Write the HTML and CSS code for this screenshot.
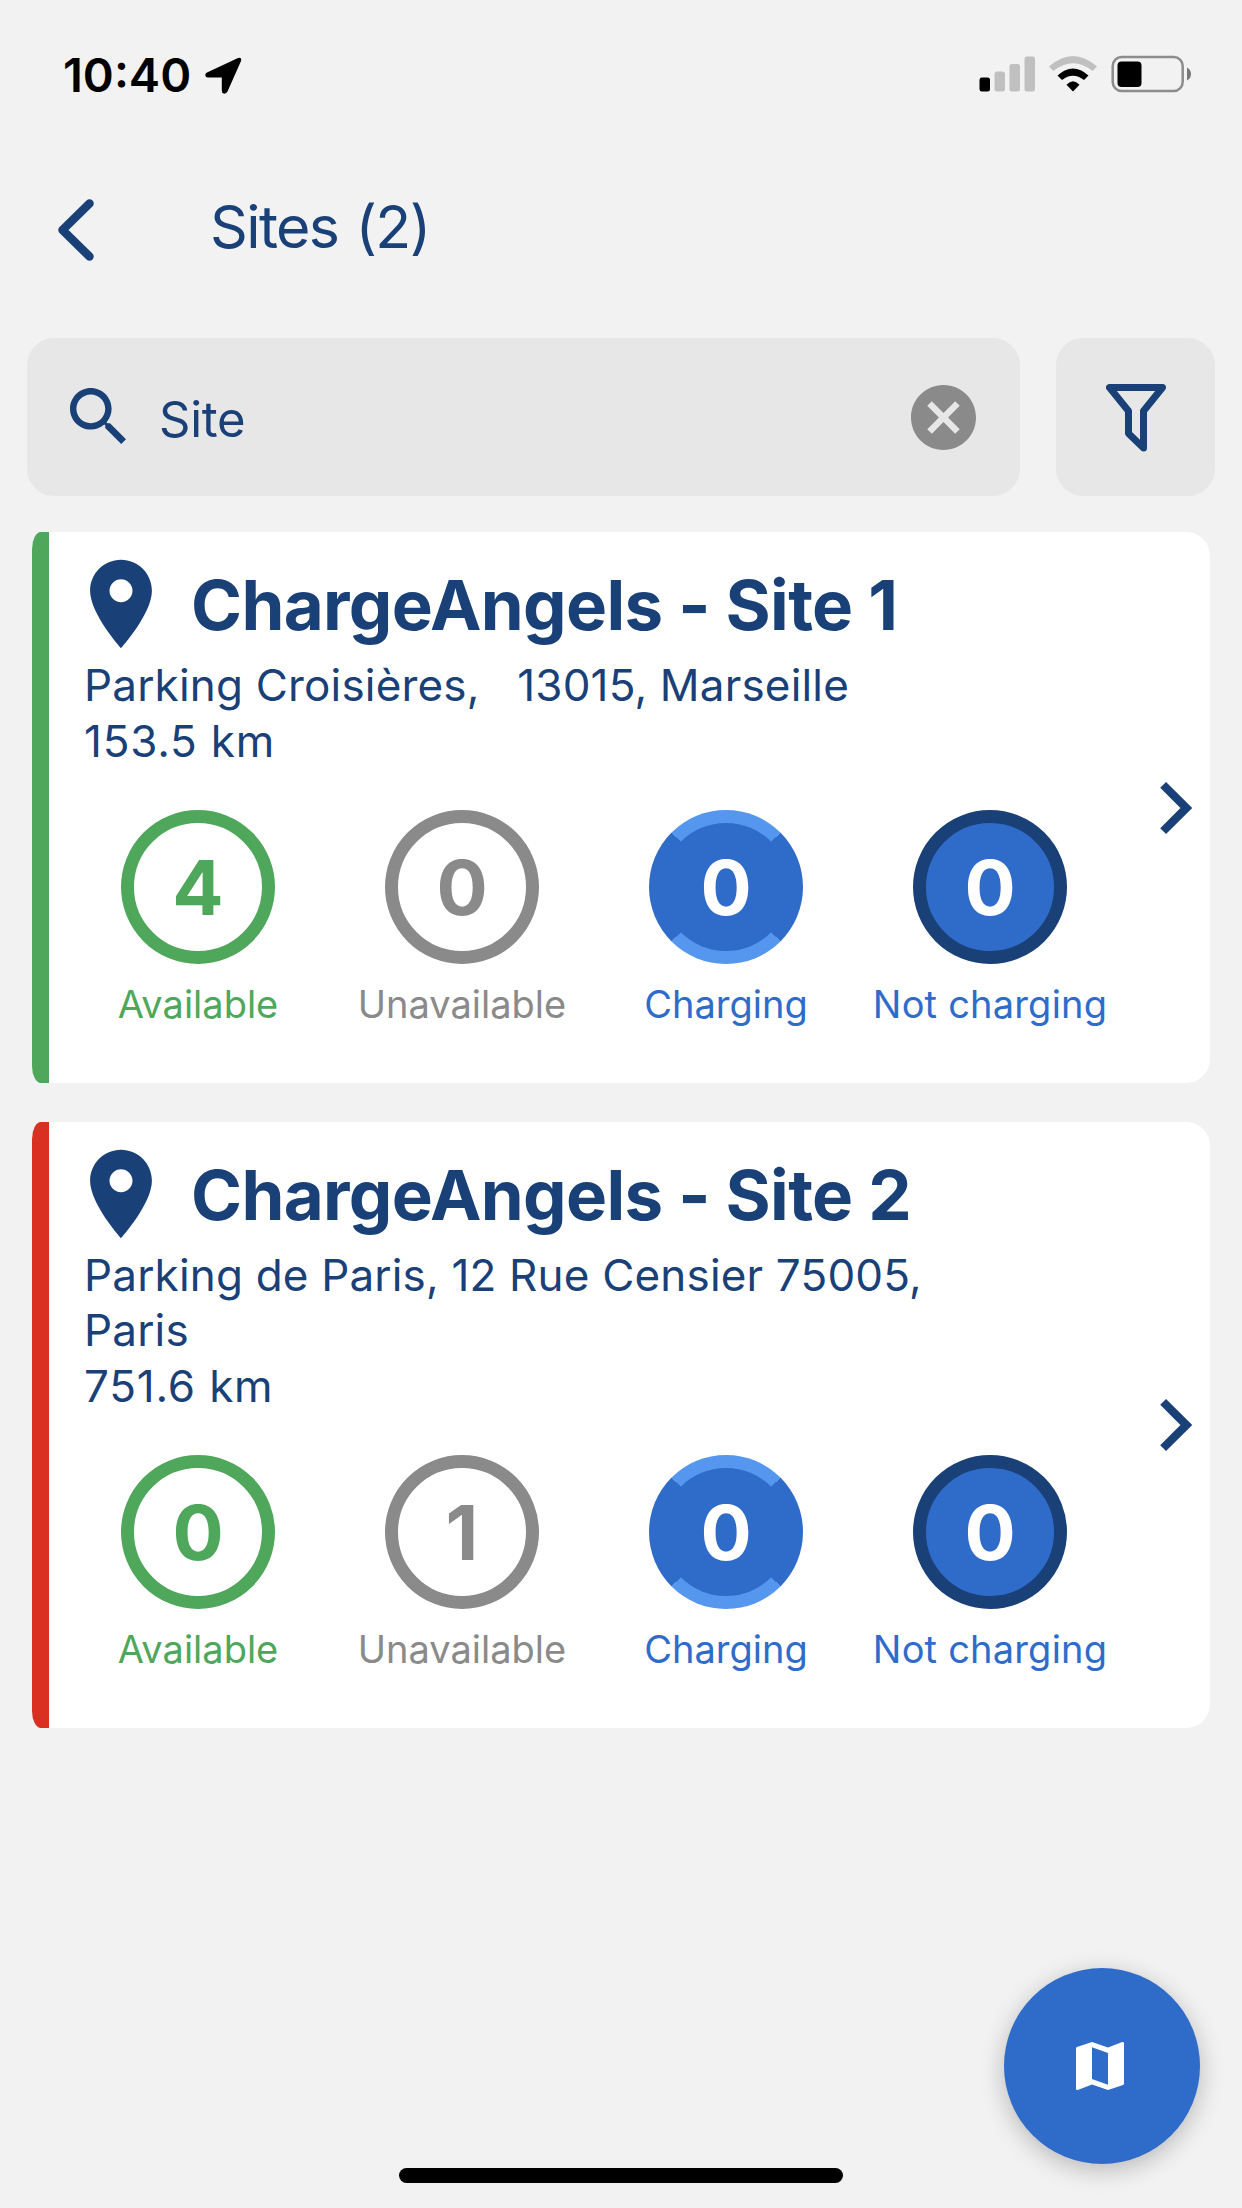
FILE: index.html
```html
<!DOCTYPE html>
<html lang="en">
<head>
<meta charset="utf-8">
<title>Sites</title>
<link rel="stylesheet" href="styles.css">
</head>
<body>
<svg class="defs" aria-hidden="true">
  <symbol id="pin" viewBox="0 0 24 24"><path d="M12 2C8.130 2 5 5.130 5 9c0 5.250 7 13 7 13s7-7.750 7-13c0-3.870-3.130-7-7-7zm0 9.600a2.600 2.600 0 1 1 0-5.200 2.600 2.600 0 0 1 0 5.200z"/></symbol>
  <symbol id="chevron" viewBox="0 0 32 52"><path d="M4 3.500 26.500 26 4 48.500" fill="none" stroke="currentColor" stroke-width="8"/></symbol>
</svg>
<div class="screen">
  <header class="status-bar">
    <div class="status-left">
      <span class="clock">10:40</span>
      <svg class="location" viewBox="0 0 37 37"><path d="M2 15.600 32.500 1.200Q37.500-.5 35.800 4.500L22.500 34.500Q21.200 37 18.800 36.600 16.800 36.200 16.800 33.500V20.500H3Q.5 20.500.3 18.500.1 16.600 2 15.600z"/></svg>
    </div>
    <svg class="indicators" viewBox="0 0 214 38">
      <rect x="1.500" y="22.500" width="10.500" height="14" rx="2.500"/>
      <g fill="#c0c0c0"><rect x="16.500" y="16.500" width="10.500" height="20" rx="2.500"/><rect x="31.500" y="9" width="10.500" height="27.500" rx="2.500"/><rect x="46.500" y="1.500" width="10.500" height="35" rx="2.500"/></g>
      <path d="M71 11.500 75.300 16Q95 .5 114.600 16L119 11.500Q95-9.500 71 11.500z" fill="#c0c0c0"/>
      <path d="M79.500 20.500 84 25Q95 16.500 106 25L110.500 20.500Q95 6.500 79.500 20.500z"/>
      <path d="M88.500 29.800 95 36.500 101.500 29.800Q95 22.500 88.500 29.800z"/>
      <rect x="134.700" y="2" width="70" height="34" rx="9" fill="none" stroke="#8c8c8c" stroke-width="2.500"/>
      <rect x="139.500" y="6.500" width="24" height="25.500" rx="4"/>
      <path d="M209 12.500Q213 14.500 213 19T209 25.500z" fill="#777"/>
    </svg>
  </header>

  <nav class="title-bar">
    <svg class="back" viewBox="0 0 36 62"><path d="M31.500 4.500 4.500 31 31.500 57.500" fill="none" stroke="currentColor" stroke-width="8.500" stroke-linecap="round" stroke-linejoin="round"/></svg>
    <h1 class="page-title">Sites (2)</h1>
  </nav>

  <div class="search-row">
    <div class="search-box">
      <svg class="search-icon" viewBox="3 3 17.490 17.490"><path d="M15.500 14h-.79l-.28-.27C15.410 12.590 16 11.110 16 9.500 16 5.910 13.090 3 9.500 3S3 5.910 3 9.500 5.910 16 9.500 16c1.610 0 3.090-.59 4.230-1.570l.27.28v.79l5 4.990L20.490 19l-4.990-5zm-6 0C7.010 14 5 11.990 5 9.500S7.010 5 9.500 5 14 7.010 14 9.500 11.990 14 9.500 14z"/></svg>
      <span class="query">Site</span>
      <svg class="clear" viewBox="2 2 20 20"><path fill="#8a8a8a" d="M12 2C6.470 2 2 6.470 2 12s4.470 10 10 10 10-4.470 10-10S17.530 2 12 2zm5 13.590L15.590 17 12 13.410 8.410 17 7 15.590 10.590 12 7 8.410 8.410 7 12 10.590 15.590 7 17 8.410 13.410 12 17 15.590z"/></svg>
    </div>
    <div class="filter-box">
      <svg class="filter-icon" viewBox="0 0 60 68"><path d="M3.500 3.500H56.500L37.500 27V64L22.500 49.500V27z" fill="none" stroke="currentColor" stroke-width="7" stroke-linejoin="round"/></svg>
    </div>
  </div>

  <main class="sites">
    <article class="card card-green">
      <div class="card-body">
        <div class="card-head"><svg class="pin"><use href="#pin"/></svg><h2 class="card-title">ChargeAngels - Site 1</h2></div>
        <p class="address">Parking Croisières,   13015, Marseille</p>
        <p class="distance">153.5 km</p>
        <div class="stats">
          <div class="stat available"><div class="ring">4</div><span class="label">Available</span></div>
          <div class="stat unavailable"><div class="ring">0</div><span class="label">Unavailable</span></div>
          <div class="stat charging"><div class="ring">0</div><span class="label">Charging</span></div>
          <div class="stat not-charging"><div class="ring">0</div><span class="label">Not charging</span></div>
        </div>
      </div>
      <svg class="chevron"><use href="#chevron"/></svg>
    </article>
    <article class="card card-red">
      <div class="card-body">
        <div class="card-head"><svg class="pin"><use href="#pin"/></svg><h2 class="card-title">ChargeAngels - Site 2</h2></div>
        <p class="address">Parking de Paris, 12 Rue Censier 75005, Paris</p>
        <p class="distance">751.6 km</p>
        <div class="stats">
          <div class="stat available"><div class="ring">0</div><span class="label">Available</span></div>
          <div class="stat unavailable"><div class="ring">1</div><span class="label">Unavailable</span></div>
          <div class="stat charging"><div class="ring">0</div><span class="label">Charging</span></div>
          <div class="stat not-charging"><div class="ring">0</div><span class="label">Not charging</span></div>
        </div>
      </div>
      <svg class="chevron"><use href="#chevron"/></svg>
    </article>
  </main>

  <div class="fab"><svg class="map-icon" viewBox="3 3 18 18"><path d="M20.500 3l-.16.030L15 5.100 9 3 3.360 4.900c-.21.070-.36.250-.36.480V20.500c0 .28.220.5.5.5l.16-.030L9 18.900l6 2.100 5.640-1.900c.21-.070.360-.25.360-.48V3.500c0-.28-.22-.5-.5-.5zM15 19l-6-2.110V5l6 2.110V19z"/></svg></div>
  <div class="home-indicator"></div>
</div>
</body>
</html>
```
FILE: styles.css
```css
* { box-sizing: border-box; margin: 0; padding: 0; }
body { background: #f2f2f2; font-family: Inter, "Liberation Sans", sans-serif; color: #1a4078; }
svg { display: block; fill: currentColor; flex: none; }
.defs { position: absolute; width: 0; height: 0; }
.screen { position: relative; width: 1242px; height: 2208px; overflow: hidden; }

.status-bar { height: 150px; padding: 46px 50px 0 63px; display: flex; justify-content: space-between; align-items: flex-start; color: #000; }
.status-left { display: flex; align-items: center; height: 58px; }
.clock { font-size: 47px; font-weight: 600; line-height: 58px; }
.location { width: 37px; height: 37px; margin-left: 14px; }
.indicators { width: 214px; height: 38px; margin-top: 9px; }

.title-bar { height: 160px; padding-left: 58px; display: flex; align-items: center; }
.back { width: 36px; height: 62px; }
.page-title { margin: 0 0 7px 116px; font-size: 59px; font-weight: 400; line-height: 72px; letter-spacing: -1.6px; word-spacing: 2px; }

.search-row { display: flex; gap: 36px; padding: 28px 27px 0; }
.search-box { flex: 1; height: 158px; border-radius: 27px; background: #e7e7e7; display: flex; align-items: center; padding: 0 44px 0 43px; }
.search-icon { width: 56px; height: 56px; margin-bottom: 2px; }
.query { flex: 1; margin-left: 33px; padding-top: 5px; font-size: 49px; line-height: 60px; letter-spacing: -0.3px; }
.clear { width: 65px; height: 65px; }
.filter-box { width: 159px; height: 158px; border-radius: 27px; background: #e7e7e7; display: flex; align-items: center; justify-content: center; }
.filter-icon { width: 60px; height: 68px; margin-top: 1px; }

.sites { display: flex; flex-direction: column; gap: 39px; padding: 36px 32px 0; }
.card { display: flex; align-items: center; background: #fff; border-left: 17px solid; border-radius: 9px 24px 24px 9px / 17px 24px 24px 17px; }
.card-green { border-left-color: #4fa75c; }
.card-red { border-left-color: #da3022; }
.card-body { width: 1110px; padding: 19px 0 56px 17px; }
.card-head { display: flex; align-items: center; height: 106px; padding-left: 2px; }
.pin { width: 106px; height: 106px; }
.card-title { margin-left: 17px; padding-top: 2px; font-size: 69px; font-weight: 700; line-height: 84px; letter-spacing: -0.65px; }
.address, .distance { padding-left: 18px; font-size: 44px; line-height: 55px; letter-spacing: 0.18px; }
.address { margin-top: 1px; width: 900px; white-space: pre-wrap; }
.distance { line-height: 56px; letter-spacing: 0.8px; }
.stats { display: grid; grid-template-columns: repeat(4, 264px); margin-top: 41px; }
.stat { display: flex; flex-direction: column; align-items: center; }
.ring { width: 154px; height: 154px; border: 13px solid; border-radius: 50%; display: flex; align-items: center; justify-content: center; padding-bottom: 1px; font-size: 76px; font-weight: 700; line-height: 90px; }
.label { margin-top: 17px; font-size: 38px; line-height: 46px; }
.available { color: #4fa75c; }
.unavailable { color: #8a8a8a; }
.charging, .not-charging { color: #2f6cca; }
.not-charging .label { letter-spacing: 0.2px; }
.charging .ring, .not-charging .ring { color: #fff; background: #2f6cca; }
.charging .ring { border-color: #5597ee #2f6cca; }
.not-charging .ring { border-color: #1a4078; }
.chevron { width: 33px; height: 54px; }

.fab { position: absolute; left: 1004px; top: 1968px; width: 196px; height: 196px; border-radius: 50%; background: #2f6cca; color: #fff; display: flex; align-items: center; justify-content: center; box-shadow: 0 6px 24px rgba(0, 0, 0, 0.24); }
.map-icon { width: 48px; height: 48px; margin-right: 4px; }
.home-indicator { position: absolute; left: 399px; top: 2168px; width: 444px; height: 15px; border-radius: 8px; background: #000; }
```
